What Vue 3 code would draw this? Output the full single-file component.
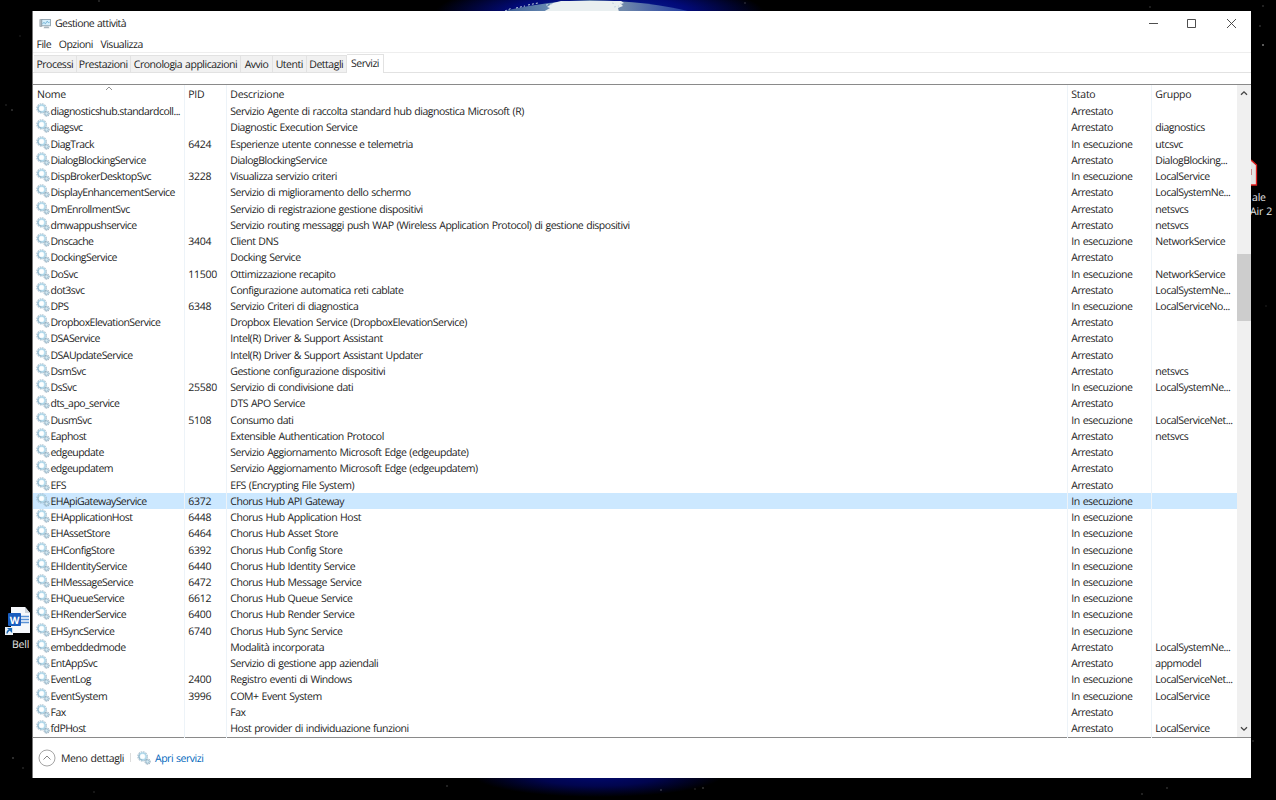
<script setup>
import { ref } from 'vue'

const menus = ['File', 'Opzioni', 'Visualizza']

const tabs = [
  { label: 'Processi', width: 42.5 },
  { label: 'Prestazioni', width: 54.5 },
  { label: 'Cronologia applicazioni', width: 110 },
  { label: 'Avvio', width: 32 },
  { label: 'Utenti', width: 33.5 },
  { label: 'Dettagli', width: 40.5 },
  { label: 'Servizi', width: 37 }
]
const activeTab = ref('Servizi')

// nome, pid, descrizione, in esecuzione, gruppo
const rows = [
  ['diagnosticshub.standardcoll...', '', 'Servizio Agente di raccolta standard hub diagnostica Microsoft (R)', 0, ''],
  ['diagsvc', '', 'Diagnostic Execution Service', 0, 'diagnostics'],
  ['DiagTrack', '6424', 'Esperienze utente connesse e telemetria', 1, 'utcsvc'],
  ['DialogBlockingService', '', 'DialogBlockingService', 0, 'DialogBlocking...'],
  ['DispBrokerDesktopSvc', '3228', 'Visualizza servizio criteri', 1, 'LocalService'],
  ['DisplayEnhancementService', '', 'Servizio di miglioramento dello schermo', 0, 'LocalSystemNe...'],
  ['DmEnrollmentSvc', '', 'Servizio di registrazione gestione dispositivi', 0, 'netsvcs'],
  ['dmwappushservice', '', 'Servizio routing messaggi push WAP (Wireless Application Protocol) di gestione dispositivi', 0, 'netsvcs'],
  ['Dnscache', '3404', 'Client DNS', 1, 'NetworkService'],
  ['DockingService', '', 'Docking Service', 0, ''],
  ['DoSvc', '11500', 'Ottimizzazione recapito', 1, 'NetworkService'],
  ['dot3svc', '', 'Configurazione automatica reti cablate', 0, 'LocalSystemNe...'],
  ['DPS', '6348', 'Servizio Criteri di diagnostica', 1, 'LocalServiceNo...'],
  ['DropboxElevationService', '', 'Dropbox Elevation Service (DropboxElevationService)', 0, ''],
  ['DSAService', '', 'Intel(R) Driver & Support Assistant', 0, ''],
  ['DSAUpdateService', '', 'Intel(R) Driver & Support Assistant Updater', 0, ''],
  ['DsmSvc', '', 'Gestione configurazione dispositivi', 0, 'netsvcs'],
  ['DsSvc', '25580', 'Servizio di condivisione dati', 1, 'LocalSystemNe...'],
  ['dts_apo_service', '', 'DTS APO Service', 0, ''],
  ['DusmSvc', '5108', 'Consumo dati', 1, 'LocalServiceNet...'],
  ['Eaphost', '', 'Extensible Authentication Protocol', 0, 'netsvcs'],
  ['edgeupdate', '', 'Servizio Aggiornamento Microsoft Edge (edgeupdate)', 0, ''],
  ['edgeupdatem', '', 'Servizio Aggiornamento Microsoft Edge (edgeupdatem)', 0, ''],
  ['EFS', '', 'EFS (Encrypting File System)', 0, ''],
  ['EHApiGatewayService', '6372', 'Chorus Hub API Gateway', 1, ''],
  ['EHApplicationHost', '6448', 'Chorus Hub Application Host', 1, ''],
  ['EHAssetStore', '6464', 'Chorus Hub Asset Store', 1, ''],
  ['EHConfigStore', '6392', 'Chorus Hub Config Store', 1, ''],
  ['EHIdentityService', '6440', 'Chorus Hub Identity Service', 1, ''],
  ['EHMessageService', '6472', 'Chorus Hub Message Service', 1, ''],
  ['EHQueueService', '6612', 'Chorus Hub Queue Service', 1, ''],
  ['EHRenderService', '6400', 'Chorus Hub Render Service', 1, ''],
  ['EHSyncService', '6740', 'Chorus Hub Sync Service', 1, ''],
  ['embeddedmode', '', 'Modalità incorporata', 0, 'LocalSystemNe...'],
  ['EntAppSvc', '', 'Servizio di gestione app aziendali', 0, 'appmodel'],
  ['EventLog', '2400', 'Registro eventi di Windows', 1, 'LocalServiceNet...'],
  ['EventSystem', '3996', 'COM+ Event System', 1, 'LocalService'],
  ['Fax', '', 'Fax', 0, ''],
  ['fdPHost', '', 'Host provider di individuazione funzioni', 0, 'LocalService']
]
const selected = ref('EHApiGatewayService')

const stars = [
  [99, 1, 0.3], [20, 36, 0.15], [12, 110, 0.35], [6, 105, 0.2], [1263, 45, 0.8], [1260, 26, 0.3], [1263, 6, 0.3],
  [1150, 7, 0.25], [745, 3, 0.25], [13, 758, 0.4], [23, 768, 0.25], [94, 792, 0.2], [447, 786, 0.3],
  [661, 790, 0.35], [703, 788, 0.35], [695, 789, 0.2], [1167, 788, 0.3], [1142, 794, 0.3], [1253, 741, 0.25], [1266, 306, 0.15]
]
</script>

<template>
  <div class="desktop">
    <svg class="wallpaper" width="1276" height="800" viewBox="0 0 1276 800">
      <defs>
        <radialGradient id="glowTop" cx="0" cy="0" r="1" gradientUnits="userSpaceOnUse" gradientTransform="translate(600 14) scale(165 34)">
          <stop offset="0" stop-color="#0a2aa8" />
          <stop offset=".55" stop-color="#020a78" />
          <stop offset="1" stop-color="#000" />
        </radialGradient>
        <radialGradient id="glowBottom" cx="0" cy="0" r="1" gradientUnits="userSpaceOnUse" gradientTransform="translate(598 775) scale(125 22)">
          <stop offset="0" stop-color="#010970" />
          <stop offset=".5" stop-color="#01054e" />
          <stop offset="1" stop-color="#000" />
        </radialGradient>
        <linearGradient id="planet" x1="500" x2="690" y1="0" y2="0" gradientUnits="userSpaceOnUse">
          <stop offset="0" stop-color="#38588f" />
          <stop offset=".3" stop-color="#6f92b8" />
          <stop offset=".65" stop-color="#7089ab" />
          <stop offset="1" stop-color="#1c37a0" />
        </linearGradient>
      </defs>
      <rect width="1276" height="800" fill="#000" />
      <rect x="430" width="340" height="14" fill="url(#glowTop)" />
      <path d="M500 12Q545 1 590 0Q650 1 692 12Z" fill="url(#planet)" />
      <path d="M543 12l7-4 -3-1 6-4 8-2 60 0 3 2 -3 1 2 2 -5 2 1 4z" fill="#e9eff0" />
      <path d="M505 11l7-3M516 8l9-2M528 5l10-2M546 5l6-1M612 3l4 1M614 7l5-1M620 3l3 2" stroke="#c6d6e4" stroke-dasharray="2 2" />
      <rect x="460" y="778" width="280" height="22" fill="url(#glowBottom)" />
      <circle v-for="s in stars" :key="s[0] + '-' + s[1]" :cx="s[0]" :cy="s[1]" r=".8" fill="#fff" :opacity="s[2]" />
    </svg>

    <div class="shortcut word">
      <svg width="26" height="29" viewBox="0 0 26 29">
        <path d="M6 1h14l5 6v20H6z" fill="#f6f8fb" />
        <path d="M20 1v6h5z" fill="#cdd3da" />
        <path d="M16 10.500h8M16 13.500h8M16 16.500h8" stroke="#5b93d6" stroke-width="1.300" />
        <rect x="3" y="7" width="13" height="13" rx="1" fill="#1a5dbe" />
        <text x="9.500" y="17.500" class="w-letter">W</text>
        <rect x="0" y="21" width="8" height="8" fill="#e9f0f6" />
        <path d="M2 27.500c0-2 1-3.500 3-3.500M3.500 22.500h3v3z" stroke="#1b68b5" stroke-width="1.200" fill="#1b68b5" />
      </svg>
      <span>Bell</span>
    </div>
    <div class="shortcut pdf">
      <svg width="8" height="28" viewBox="0 0 8 28">
        <path d="M0 1l5.500 5v20H0" fill="#e4e4e4" stroke="#df1f1f" stroke-width="1.300" />
        <path d="M0 10v6" stroke="#a33" />
      </svg>
      <span>ale</span>
      <span>Air 2</span>
    </div>

    <svg class="defs" width="0" height="0">
      <symbol id="gears" viewBox="0 0 14 14">
        <circle cx="5.600" cy="5.400" r="4.600" fill="none" stroke="#a9bfcd" stroke-width="1.300" stroke-dasharray="1.600 .8" />
        <circle cx="5.600" cy="5.400" r="3.500" fill="#eef9fd" stroke="#add6e9" stroke-width="1.500" />
        <path d="M2.400 3.600A3.700 3.700 0 0 0 5.600 9.100" fill="none" stroke="#8ba9bd" stroke-width=".8" />
        <circle cx="5.600" cy="5.400" r="1.900" fill="#fff" />
        <circle cx="10.600" cy="10.600" r="2.500" fill="none" stroke="#93a9b9" stroke-width="1.100" stroke-dasharray="1 .6" />
        <circle cx="10.600" cy="10.600" r="1.700" fill="#d8eaf2" stroke="#91b7cc" stroke-width=".9" />
      </symbol>
    </svg>

    <div class="window">
      <header class="titlebar">
        <svg class="app-icon" width="12" height="12" viewBox="0 0 12 12">
          <path d="M.8 1.500v7h2v-7z" fill="#b9c2c9" stroke="#8d989f" stroke-width=".6" />
          <rect x="2.800" y="1.500" width="8.600" height="6.300" fill="#d5eefb" stroke="#8396a3" stroke-width=".8" />
          <path d="M3.500 5.500l1.500-1 1.500 1.200 1.700-2.500 1.200 1.500 1.200-.5" fill="none" stroke="#5ba3cc" stroke-width=".8" />
          <path d="M4.500 10.200l1-1.700h4l1 1.700z" fill="#a9b4bc" />
        </svg>
        <span class="title">Gestione attività</span>
        <svg class="controls" width="96" height="12" viewBox="0 0 96 12">
          <path d="M4 5.500h9M42.500 1.500h8v8h-8zM82 1l9 9M91 1l-9 9" fill="none" stroke="#3a3a3a" stroke-width=".9" />
        </svg>
      </header>

      <nav class="menubar">
        <span v-for="m in menus" :key="m">{{ m }}</span>
      </nav>

      <div class="tabs">
        <div
          v-for="t in tabs"
          :key="t.label"
          class="tab"
          :class="{ active: t.label === activeTab }"
          :style="{ width: t.width + 'px' }"
          @click="activeTab = t.label"
        >{{ t.label }}</div>
      </div>

      <div class="content">
        <div class="list">
          <div class="row head">
            <div class="cell name">
              Nome
              <svg class="sort" width="8" height="5" viewBox="0 0 8 5"><path d="M1 4l3-3 3 3" fill="none" stroke="#777" stroke-width=".8" /></svg>
            </div>
            <div class="cell">PID</div>
            <div class="cell">Descrizione</div>
            <div class="cell">Stato</div>
            <div class="cell">Gruppo</div>
          </div>
          <div
            v-for="r in rows"
            :key="r[0]"
            class="row"
            :class="{ selected: r[0] === selected }"
            @click="selected = r[0]"
          >
            <div class="cell name">
              <svg class="gear" width="14" height="14"><use href="#gears" /></svg>
              <span>{{ r[0] }}</span>
            </div>
            <div class="cell pid">{{ r[1] }}</div>
            <div class="cell desc">{{ r[2] }}</div>
            <div class="cell">{{ r[3] ? 'In esecuzione' : 'Arrestato' }}</div>
            <div class="cell">{{ r[4] }}</div>
          </div>
        </div>
        <div class="scrollbar">
          <svg width="8" height="6" viewBox="0 0 8 6"><path d="M1 4.800l3-3 3 3" fill="none" stroke="#444" stroke-width="1.300" /></svg>
          <div class="track"><div class="thumb"></div></div>
          <svg width="8" height="6" viewBox="0 0 8 6"><path d="M1 1.200l3 3 3-3" fill="none" stroke="#444" stroke-width="1.300" /></svg>
        </div>
      </div>

      <footer class="footer">
        <svg width="18" height="18" viewBox="0 0 18 18">
          <circle cx="9" cy="9" r="8" fill="#fff" stroke="#8d8d8d" stroke-width=".8" />
          <path d="M5.500 10.500L9 7l3.500 3.500" fill="none" stroke="#777" stroke-width=".9" />
        </svg>
        <span class="less">Meno dettagli</span>
        <span class="divider"></span>
        <svg class="gear" width="14" height="14"><use href="#gears" /></svg>
        <span class="link">Apri servizi</span>
      </footer>
    </div>
  </div>
</template>

<style>
body {
  background: #000;
  overflow: hidden;
}
</style>

<style scoped>
.desktop {
  position: relative;
  width: 1276px;
  height: 800px;
  overflow: hidden;
  font-family: "Open Sans", "Noto Sans", sans-serif;
  font-size: 10.5px;
  letter-spacing: -0.48px;
  word-spacing: 0.7px;
  text-rendering: geometricPrecision;
  color: #1c1c1c;
  white-space: nowrap;
}

.wallpaper,
.defs {
  position: absolute;
  top: 0;
  left: 0;
}

.shortcut {
  position: absolute;
  display: flex;
  flex-direction: column;
  color: #e6e6e6;
  line-height: 14px;
  letter-spacing: -0.2px;
}

.word {
  left: 5px;
  top: 606px;
}

.word span {
  margin: 3px 0 0 7px;
}

.w-letter {
  font-size: 10px;
  font-weight: bold;
  fill: #fff;
  text-anchor: middle;
}

.pdf {
  left: 1251px;
  top: 159px;
}

.pdf span {
  margin-left: 1px;
}

.pdf svg {
  margin-bottom: 4px;
}

.pdf span:last-child {
  margin-left: -1px;
}

.window {
  position: absolute;
  left: 32px;
  top: 11px;
  width: 1219px;
  height: 767px;
  box-sizing: border-box;
  border-left: 1px solid #777;
  background: #fff;
  display: flex;
  flex-direction: column;
}

.titlebar {
  display: flex;
  align-items: center;
  height: 25px;
  padding: 0 10px 0 6px;
  flex: none;
}

.title {
  margin: 1px 0 0 4px;
  flex: 1;
  letter-spacing: -0.55px;
}

.menubar {
  display: flex;
  gap: 7.500px;
  height: 16px;
  line-height: 18px;
  padding-left: 3.500px;
  border-bottom: 1px solid #eee;
  flex: none;
}

.tabs {
  display: flex;
  align-items: flex-end;
  height: 19px;
  padding-left: 1px;
  border-bottom: 1px solid #e2e2e2;
  flex: none;
}

.tab {
  box-sizing: border-box;
  height: 17px;
  line-height: 19px;
  text-align: center;
  background: #f1f1f1;
  border: 1px solid #e2e2e2;
  border-width: 1px 1px 0 0;
}

.tab.active {
  height: 19px;
  line-height: 19px;
  margin-bottom: -1px;
  background: #fff;
}

.content {
  display: flex;
  height: 652px;
  margin-top: 11px;
  border-top: 1px solid #8a8a8a;
  border-bottom: 1px solid #8a8a8a;
  flex: none;
}

.list {
  width: 1203.500px;
}

.row {
  display: grid;
  grid-template-columns: 152px 42px 841px 84px 84.500px;
  height: 16.240px;
  line-height: 18px;
}

.row.head {
  height: 18.200px;
  line-height: 21px;
  letter-spacing: -0.25px;
}

.cell {
  position: relative;
  height: 100%;
  box-sizing: border-box;
  padding-left: 3.300px;
  border-right: 1px solid #edf3f8;
}

.cell:last-child {
  border-right: none;
}

.pid {
  letter-spacing: -0.25px;
}

.name {
  display: flex;
  padding-left: 4px;
}

.name span {
  letter-spacing: -0.54px;
}

.name .gear {
  margin: 0 0.500px 0 -1px;
  flex: none;
}

.selected {
  background: #cce8ff;
}

.sort {
  position: absolute;
  left: 72px;
  top: 1px;
}

.scrollbar {
  width: 14.500px;
  background: #f0f0f0;
  display: flex;
  flex-direction: column;
  align-items: center;
  padding: 5px 0;
  box-sizing: border-box;
}

.track {
  width: 100%;
  flex: 1;
}

.thumb {
  height: 67px;
  margin-top: 158px;
  background: #cdcdcd;
}

.footer {
  display: flex;
  align-items: center;
  flex: 1;
  padding: 0 0 1px 5px;
}

.less {
  margin: 2px 0 0 5px;
  letter-spacing: -0.4px;
}

.divider {
  width: 1px;
  height: 9px;
  margin: 0 6px;
  background: #ddd;
}

.link {
  margin: 2px 0 0 4px;
  color: #0066bb;
}
</style>
